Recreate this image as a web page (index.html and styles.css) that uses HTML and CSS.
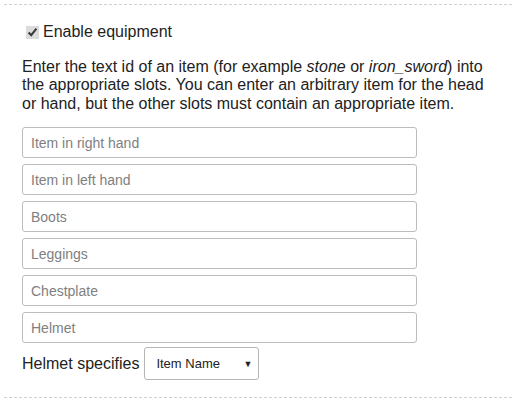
FILE: index.html
```html
<!DOCTYPE html>
<html>
<head>
<meta charset="utf-8">
<link rel="stylesheet" href="styles.css">
</head>
<body>
<div class="panel">
  <label class="enable"><input type="checkbox" checked> Enable equipment</label>
  <p class="help">Enter the text id of an item (for example <em>stone</em> or <em>iron_sword</em>) into the appropriate slots. You can enter an arbitrary item for the head or hand, but the other slots must contain an appropriate item.</p>
  <div class="slots">
    <input class="slot" type="text" placeholder="Item in right hand">
    <input class="slot" type="text" placeholder="Item in left hand">
    <input class="slot" type="text" placeholder="Boots">
    <input class="slot" type="text" placeholder="Leggings">
    <input class="slot" type="text" placeholder="Chestplate">
    <input class="slot" type="text" placeholder="Helmet">
  </div>
  <div class="spec">
    <span>Helmet specifies</span>
    <div class="select"><span>Item Name</span><span class="arrow">&#9660;</span></div>
  </div>
</div>
</body>
</html>
```
FILE: styles.css
```css
html, body {
  margin: 0;
  padding: 0;
  background: #fff;
}
body {
  font-family: "Liberation Sans", Arial, sans-serif;
  font-size: 16px;
  color: #222;
}
.panel {
  margin: 4px 8px 0 4px;
  border-top: 1px dashed #d0d0d0;
  border-bottom: 1px dashed #d0d0d0;
  padding: 17px 18px 16px 18px;
  height: 359px;
  box-sizing: content-box;
}
.enable {
  display: flex;
  align-items: center;
  gap: 4px;
  height: 20px;
  line-height: 20px;
}
.enable input {
  margin: 0 0 0 4px;
  width: 13px;
  height: 13px;
  accent-color: #dcdcdc;
}
.help {
  margin: 16px 0 0 0;
  line-height: 18.4px;
  width: 478px;
}
.slots {
  margin-top: 14px;
  display: flex;
  flex-direction: column;
  gap: 6px;
}
.slot {
  width: 395px;
  height: 31px;
  box-sizing: border-box;
  border: 1px solid #bcbcbc;
  border-radius: 3px;
  padding: 0 8px;
  font-family: "Liberation Sans", Arial, sans-serif;
  font-size: 14px;
  margin: 0;
}
.slot::placeholder {
  color: #808080;
}
.spec {
  margin-top: 4px;
  display: flex;
  align-items: center;
  gap: 5px;
}
.select {
  width: 115px;
  height: 33px;
  box-sizing: border-box;
  border: 1px solid #b5b5b5;
  border-radius: 3px;
  display: flex;
  align-items: center;
  justify-content: space-between;
  padding: 0 6px 0 11px;
  font-size: 13px;
  color: #222;
}
.arrow {
  font-size: 9px;
}
```
